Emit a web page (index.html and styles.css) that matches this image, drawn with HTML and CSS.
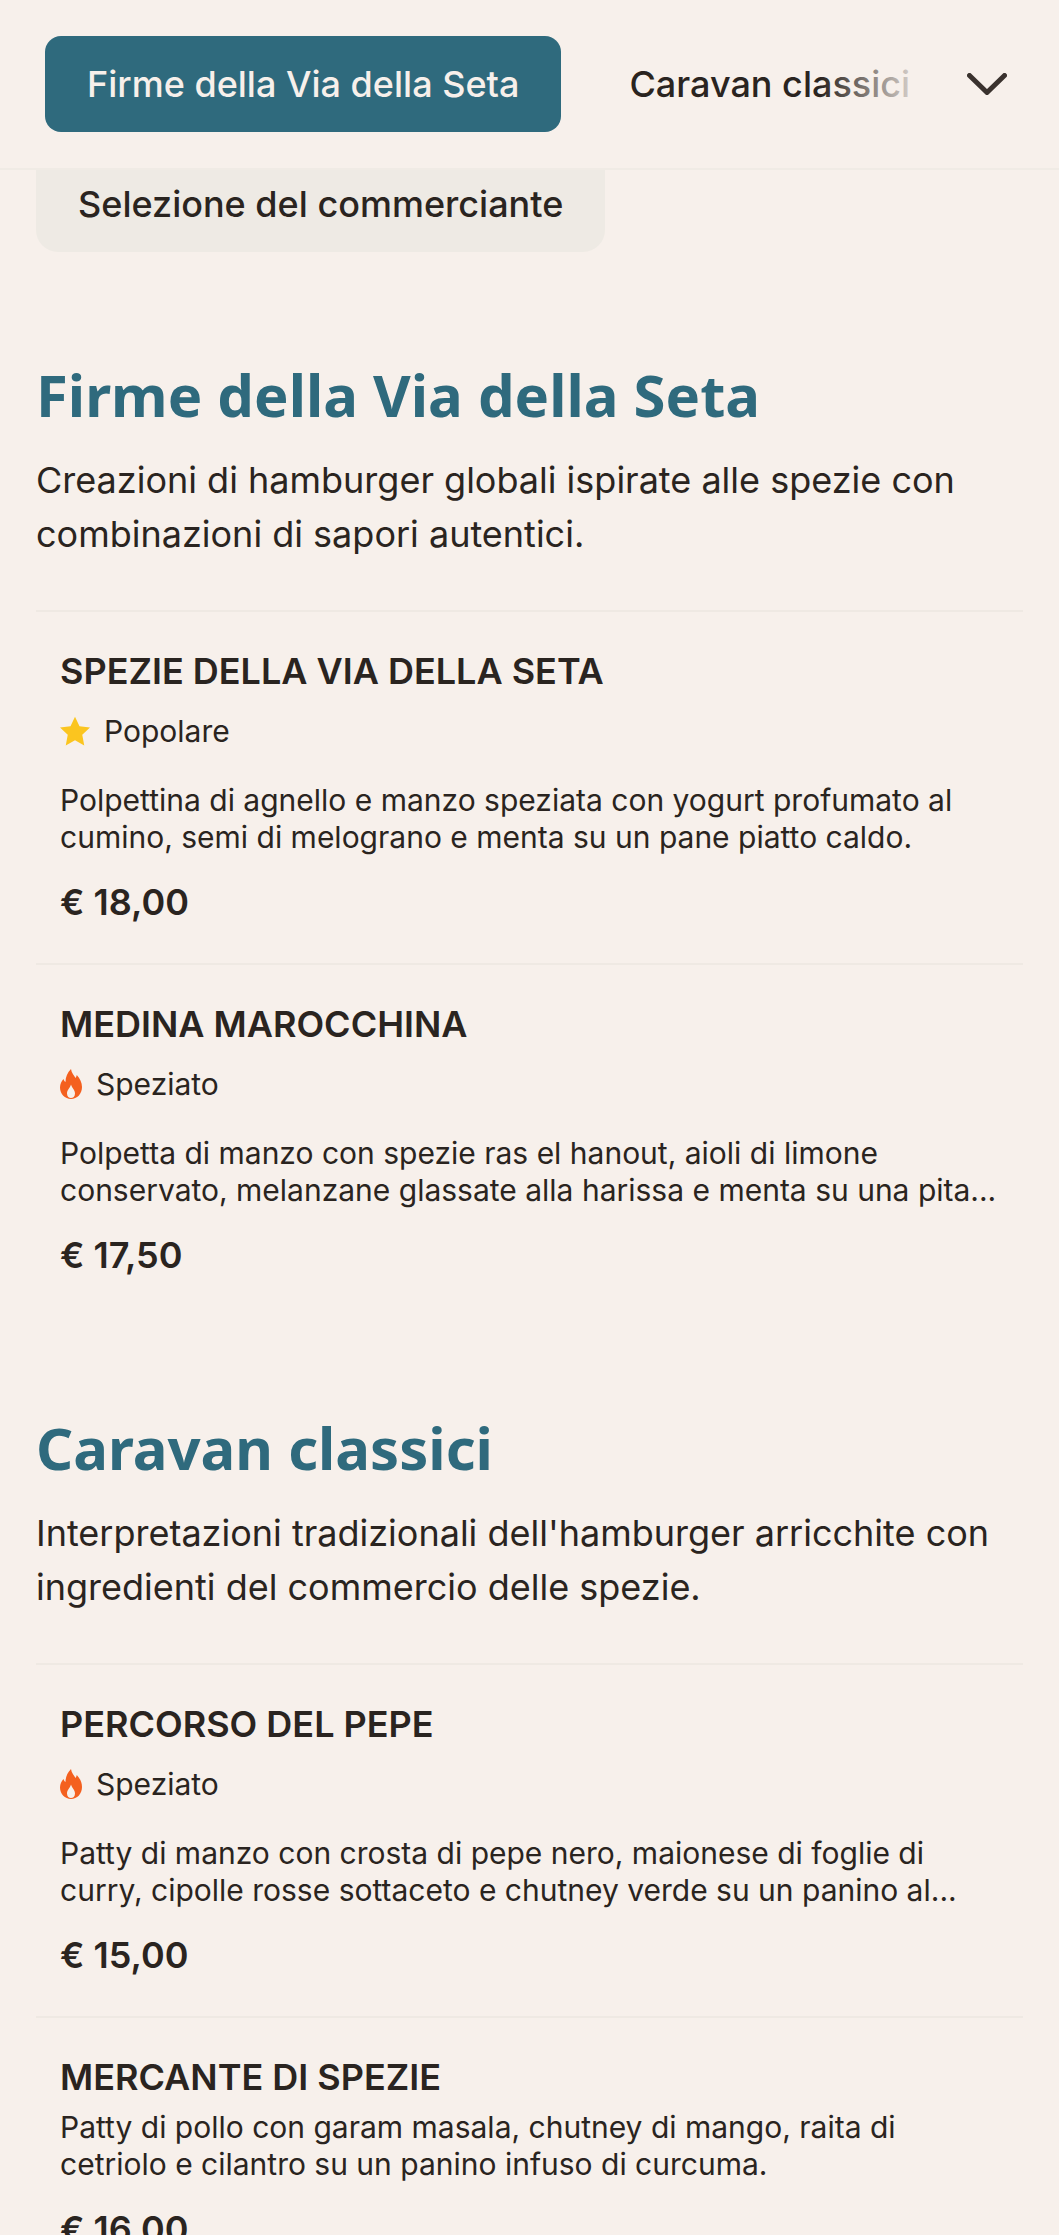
FILE: index.html
```html
<!DOCTYPE html>
<html lang="it">
<head>
    <meta charset="UTF-8">
    <meta name="viewport" content="width=device-width, initial-scale=1.0">
    <title>Menu</title>
    <link rel="stylesheet" href="styles.css">
</head>
<body>
    <nav class="tabbar">
        <div class="tabs">
            <a class="tab tab_active">Firme della Via della Seta</a>
            <a class="tab">Caravan classici</a>
        </div>
        <svg class="chevron" viewBox="0 0 40 22" aria-hidden="true">
            <path d="M2.5 2.5 L20 19.5 L37.5 2.5" />
        </svg>
    </nav>

    <main class="content">
        <div class="chip">Selezione del commerciante</div>

        <section class="category category_first">
            <h2 class="category_title">Firme della Via della Seta</h2>
            <p class="category_text">Creazioni di hamburger globali ispirate alle spezie con combinazioni di sapori autentici.</p>

            <article class="item">
                <h3 class="item_name">SPEZIE DELLA VIA DELLA SETA</h3>
                <div class="tag">
                    <svg class="tag_star" viewBox="0 0 24 24" aria-hidden="true">
                        <path d="M12 0.5 L15.6 8.2 L24 9.2 L17.8 15 L19.4 23.5 L12 19.3 L4.6 23.5 L6.2 15 L0 9.2 L8.4 8.2 Z" />
                    </svg>
                    Popolare
                </div>
                <p class="item_text">Polpettina di agnello e manzo speziata con yogurt profumato al cumino, semi di melograno e menta su un pane piatto caldo.</p>
                <div class="price">€ 18,00</div>
            </article>

            <article class="item">
                <h3 class="item_name">MEDINA MAROCCHINA</h3>
                <div class="tag">
                    <svg class="tag_fire" viewBox="0 0 22 30" aria-hidden="true">
                        <path fill-rule="evenodd" d="M11 0 C11.5 4 14 6.5 15.5 9 C16.2 8 16.6 7 16.8 6 C20 9.5 22 13.5 22 18 C22 25 17 30 11 30 C5 30 0 25 0 18.5 C0 15 1.5 12 3.5 10 C4 11.5 4.6 12.5 5.5 13 C5.5 8 7.5 3.5 11 0 Z M11 15.5 C10 19 7 21 7 24.5 C7 27.5 9 29 11 29 C13 29 15 27.5 15 24.5 C15 21 12 19 11 15.5 Z" />
                    </svg>
                    Speziato
                </div>
                <p class="item_text">Polpetta di manzo con spezie ras el hanout, aioli di limone conservato, melanzane glassate alla harissa e menta su una pita...</p>
                <div class="price">€ 17,50</div>
            </article>
        </section>

        <section class="category">
            <h2 class="category_title">Caravan classici</h2>
            <p class="category_text">Interpretazioni tradizionali dell'hamburger arricchite con ingredienti del commercio delle spezie.</p>

            <article class="item">
                <h3 class="item_name">PERCORSO DEL PEPE</h3>
                <div class="tag">
                    <svg class="tag_fire" viewBox="0 0 22 30" aria-hidden="true">
                        <path fill-rule="evenodd" d="M11 0 C11.5 4 14 6.5 15.5 9 C16.2 8 16.6 7 16.8 6 C20 9.5 22 13.5 22 18 C22 25 17 30 11 30 C5 30 0 25 0 18.5 C0 15 1.5 12 3.5 10 C4 11.5 4.6 12.5 5.5 13 C5.5 8 7.5 3.5 11 0 Z M11 15.5 C10 19 7 21 7 24.5 C7 27.5 9 29 11 29 C13 29 15 27.5 15 24.5 C15 21 12 19 11 15.5 Z" />
                    </svg>
                    Speziato
                </div>
                <p class="item_text">Patty di manzo con crosta di pepe nero, maionese di foglie di curry, cipolle rosse sottaceto e chutney verde su un panino al...</p>
                <div class="price">€ 15,00</div>
            </article>

            <article class="item">
                <h3 class="item_name item_name_tight">MERCANTE DI SPEZIE</h3>
                <p class="item_text">Patty di pollo con garam masala, chutney di mango, raita di cetriolo e cilantro su un panino infuso di curcuma.</p>
                <div class="price">€ 16,00</div>
            </article>
        </section>
    </main>
</body>
</html>
```

FILE: styles.css
```css
html, body
{
    height: 100%;
    overflow: hidden;
}
body
{
    margin: 0;
    background-color: #f7f0eb;
    color: #2a2420;
    font-family: Inter, 'Noto Sans', sans-serif;
}
.tabbar
{
    display: flex;
    align-items: center;
    height: 170px;
    box-sizing: border-box;
    padding: 0 52px 0 45px;
    border-bottom: 2px solid #f0ebe5;
}
.tabs
{
    position: relative;
    display: flex;
    flex: 1;
    align-items: center;
    gap: 46px;
}
.tabs::after
{
    content: "";
    position: absolute;
    top: 0;
    right: 0;
    bottom: 0;
    width: 110px;
    background-image: linear-gradient(to right, rgba(247, 240, 235, 0), #f7f0eb);
}
.tab
{
    flex: none;
    padding-left: 22px;
    font-size: 36px;
    font-weight: 500;
    line-height: 96px;
}
.tab_active
{
    padding: 0 42px;
    border-radius: 16px;
    background-color: #2f6a7d;
    color: #f7f0eb;
}
.chevron
{
    flex: none;
    width: 40px;
    height: 22px;
    margin-left: 37px;
}
.chevron path
{
    fill: none;
    stroke: #3a322e;
    stroke-width: 5;
    stroke-linecap: round;
    stroke-linejoin: round;
}
.content
{
    padding: 0 36px;
}
.chip
{
    display: inline-block;
    height: 82px;
    padding: 0 42px;
    border-radius: 0 0 22px 22px;
    background-color: #eeeae4;
    font-size: 36px;
    font-weight: 500;
    line-height: 68px;
}
.category
{
    margin-top: 96px;
}
.category_first
{
    margin-top: 107px;
}
.category_title
{
    margin: 0;
    color: #2f6a7d;
    font-family: 'Noto Sans', sans-serif;
    font-size: 58px;
    font-weight: 700;
    line-height: 72px;
}
.category_text
{
    margin: 23px 0 0;
    font-size: 36px;
    line-height: 53.5px;
}
.item
{
    padding: 37px 24px 39px;
    border-top: 2px solid #efe9e3;
}
.category_text + .item
{
    margin-top: 49px;
}
.item_name
{
    margin: 0 0 18px;
    font-size: 36px;
    font-weight: 600;
    line-height: 44px;
}
.item_name_tight
{
    margin-bottom: 10px;
}
.tag
{
    display: flex;
    align-items: center;
    gap: 14px;
    margin-bottom: 31px;
    font-size: 30px;
    line-height: 40px;
}
.tag_star
{
    width: 30px;
    height: 30px;
    fill: #fbc51f;
}
.tag_fire
{
    width: 22px;
    height: 30px;
    fill: #f4601f;
}
.item_text
{
    margin: 0 0 25px;
    font-size: 30px;
    line-height: 36.5px;
}
.price
{
    font-size: 36px;
    font-weight: 600;
    line-height: 44px;
}
```
